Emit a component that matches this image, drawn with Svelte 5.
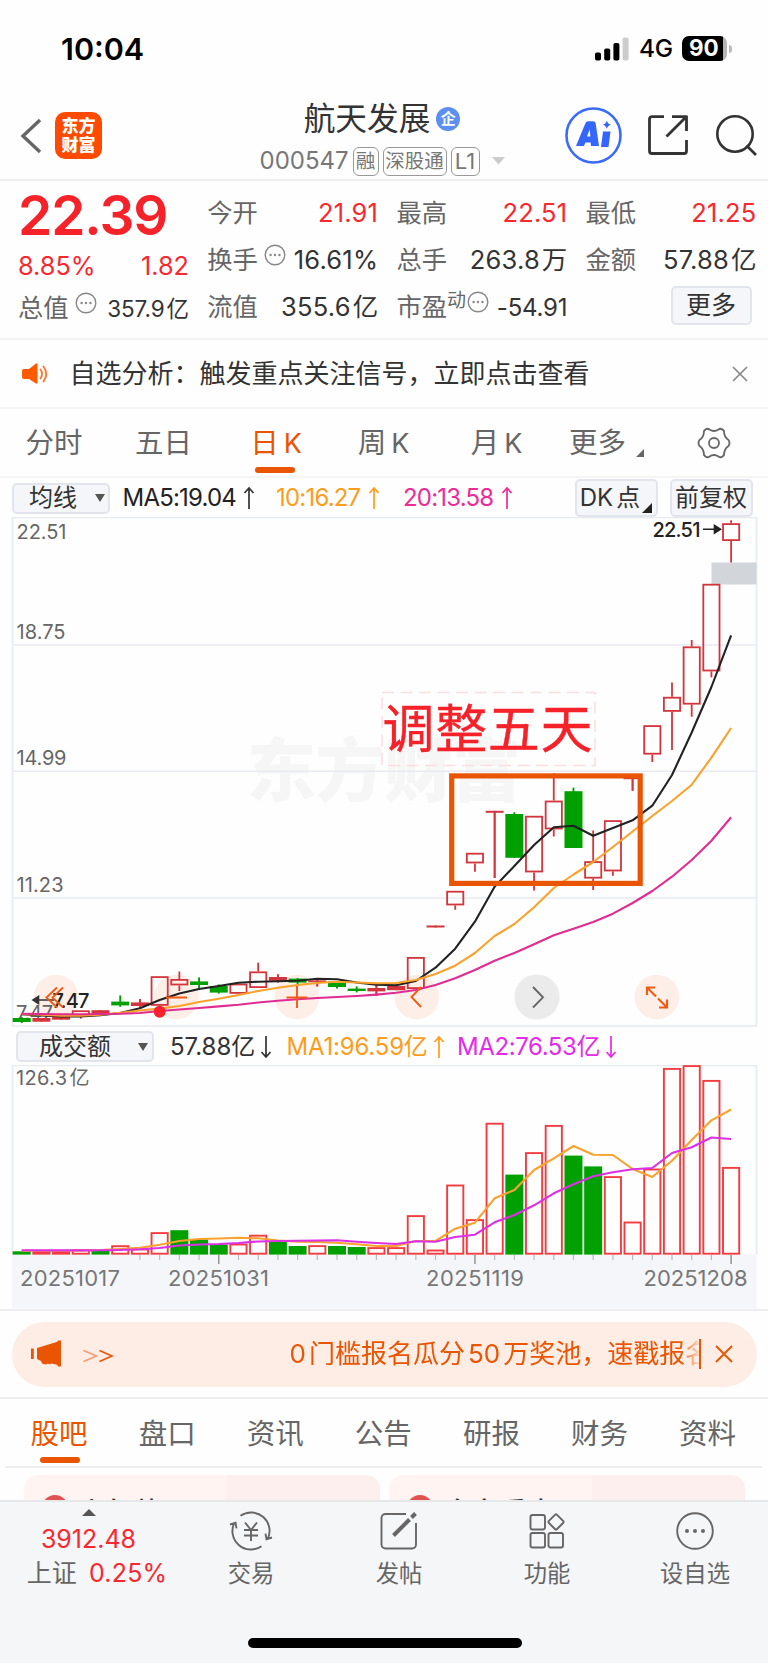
<script>
    let activePeriod = $state("日K");
    let activeSection = $state("股吧");

    const periods = ["分时", "五日", "日K", "周K", "月K", "更多"];
    const sections = ["股吧", "盘口", "资讯", "公告", "研报", "财务", "资料"];

    const FIRST_X = 21.7;
    const STEP = 19.706;
    const BASE = 1254.3;

    const cx = (i) => FIRST_X + STEP * i;

    // [type, body top, body bottom, wick top, wick bottom]
    // r = hollow red, f = filled red, g = green
    const candles = [
        ["g", 1018, 1022, 1017, 1023],
        ["f", 1018, 1021.7, 1018, 1021.7],
        ["f", 1016, 1019.7, 1016, 1019.7],
        ["r", 1010.3, 1017, 1010.3, 1018.6],
        ["f", 1010.2, 1014, 1010.2, 1014],
        ["g", 1001.6, 1005.4, 995.4, 1006.8],
        ["f", 1002.4, 1006, 999, 1007.4],
        ["r", 976.2, 1005.8, 976.2, 1005.8],
        ["r", 979, 985.4, 971.4, 991],
        ["g", 981.4, 985, 977.4, 988.6],
        ["g", 986, 992.6, 984.4, 993.6],
        ["r", 983.6, 993.8, 983.6, 993.8],
        ["r", 971.4, 988, 962.6, 988],
        ["f", 977, 980.8, 974.4, 982.4],
        ["g", 978.6, 982.6, 978, 984],
        ["f", 980.4, 982.2, 979, 986.4],
        ["g", 981.4, 987, 981.4, 988.4],
        ["g", 988.6, 991, 986.4, 992.4],
        ["f", 988, 991.4, 985, 996],
        ["f", 986, 990.2, 986, 990.2],
        ["r", 957, 989, 957, 989],
        ["f", 925.5, 927.5, 925.5, 927.5],
        ["r", 890.8, 905.4, 890.8, 909.8],
        ["r", 852.8, 863.4, 852.8, 871.8],
        ["f", 810.8, 812.8, 810.8, 878],
        ["g", 814, 857.8, 812.2, 857.8],
        ["r", 815.8, 872.4, 815.8, 890.4],
        ["r", 800.6, 829.4, 773.2, 836.4],
        ["g", 791.2, 848, 787.6, 848],
        ["r", 861.2, 878.6, 830.4, 890],
        ["r", 820.2, 871.4, 820.2, 875.8],
        ["f", 777.4, 779.2, 777.4, 790.8],
        ["r", 725.2, 754.6, 725.2, 762],
        ["r", 696.8, 711.8, 682.6, 750],
        ["r", 646.4, 704.6, 640, 716.8],
        ["r", 583.8, 671.4, 583.8, 677.4],
        ["r", 523.2, 541, 520.2, 562.4]
    ];

    const ma5 = [1014.3, 1015.5, 1016.5, 1016.5, 1015.3, 1013, 1008.3, 1000, 993.5, 989, 986, 982.7, 981.7, 981.3, 980.7, 978.7, 979.3, 982.5, 984.7, 985.3, 981, 967.7, 948.7, 921.7, 886.7, 866, 845, 827.3, 825.7, 835.7, 828, 820.3, 805.7, 775, 732.5, 687, 635.3];
    const ma10 = [1014, 1014.8, 1015.6, 1015.8, 1014.8, 1012.8, 1010.5, 1008.6, 1006, 1002, 998.7, 995, 991, 987.7, 985, 983, 981.7, 982.5, 983.3, 983, 980, 974, 965.7, 953, 936, 924, 907.3, 888, 874.5, 862, 847, 831.5, 816, 801, 784.7, 757.7, 728];
    const ma20 = [1013.7, 1014, 1014.2, 1014.2, 1014, 1013.8, 1013, 1011, 1009.5, 1008, 1006.4, 1004.7, 1002.5, 1000.8, 999.3, 998, 997, 996, 994.6, 992.8, 990, 985, 978.3, 970, 960.7, 953, 944.3, 935.3, 928.7, 922, 913.7, 903, 891, 876.7, 860, 840.7, 817.3];

    const volumes = [
        ["g", 1251.3], ["r", 1251.2], ["r", 1251.2], ["r", 1249.3], ["g", 1250.3],
        ["r", 1245.3], ["r", 1248.6], ["r", 1232.2], ["g", 1230.2], ["g", 1239.4],
        ["g", 1244.4], ["r", 1243.6], ["r", 1234.8], ["g", 1242], ["g", 1246],
        ["r", 1245.2], ["g", 1246], ["g", 1247], ["r", 1247.2], ["r", 1247.2],
        ["r", 1215.2], ["r", 1249.6], ["r", 1184.6], ["r", 1219.2], ["r", 1122.8],
        ["g", 1174.6], ["r", 1152.2], ["r", 1125], ["g", 1155.6], ["g", 1166.4],
        ["r", 1176.2], ["r", 1221.6], ["r", 1168.6], ["r", 1068], ["r", 1065.2],
        ["r", 1080], ["r", 1167]
    ];

    const volMa1 = [1250.7, 1250.7, 1250.7, 1250.5, 1250, 1249, 1247.7, 1244.7, 1241, 1239, 1238.5, 1237.7, 1238.3, 1240.5, 1241.7, 1242, 1242.7, 1244.3, 1246, 1246, 1241, 1241, 1228.7, 1222.7, 1198.3, 1190, 1170, 1158.3, 1146, 1154.7, 1155, 1169, 1177, 1160.7, 1140, 1120.3, 1109.5];
    const volMa2 = [1250.3, 1250.4, 1250.4, 1250.4, 1250.3, 1250, 1249.3, 1248, 1245.5, 1244.5, 1244, 1243, 1241.5, 1241, 1240.7, 1240.5, 1240.3, 1241.7, 1243, 1244, 1241.3, 1241.7, 1237, 1234.7, 1222.3, 1215, 1205.3, 1193.3, 1184.3, 1176.3, 1172.3, 1169.3, 1168, 1153, 1147.3, 1137.5, 1139];

    const line = (values) => values.map((y, i) => `${cx(i).toFixed(1)},${y}`).join(" ");
    const ticks = Array.from({ length: 31 }, (_, n) => n + 6);
</script>

{#snippet arrow(down)}
    <svg class="arrow" class:down width="12" height="24" viewBox="0 0 12 24">
        <path d="M6 23V2M1.5 7 6 2l4.5 5" fill="none" stroke="currentColor" stroke-width="1.7" />
    </svg>
{/snippet}

{#snippet dots()}
    <svg class="dots" width="22" height="22" viewBox="0 0 22 22">
        <circle cx="11" cy="11" r="9.8" fill="none" stroke="#888" stroke-width="1.4" />
        <circle cx="6.6" cy="11" r="1.2" fill="#888" /><circle cx="11" cy="11" r="1.2" fill="#888" /><circle cx="15.4" cy="11" r="1.2" fill="#888" />
    </svg>
{/snippet}

<div class="screen">
    <div class="status">
        <span class="clock">10:04</span>
        <div class="status-right">
            <svg width="34" height="24" viewBox="0 0 34 24">
                <rect x="0" y="15.5" width="6" height="8" rx="1.8" />
                <rect x="9.2" y="11.5" width="6" height="12" rx="1.8" />
                <rect x="18.4" y="6" width="6" height="17.5" rx="1.8" />
                <rect x="27.6" y="0.5" width="6" height="23" rx="1.8" fill="#ccc" />
            </svg>
            <span class="net">4G</span>
            <div class="battery"><span>90</span></div>
            <i class="tip"></i>
        </div>
    </div>

    <header>
        <svg class="back" width="22" height="36" viewBox="0 0 22 36"><path d="M20 2 3 18l17 16" fill="none" stroke="#666" stroke-width="3.4" /></svg>
        <div class="logo"><span>东方</span><span>财富</span></div>
        <div class="title">
            <div class="name">航天发展<b class="corp">企</b></div>
            <div class="code">
                <span class="num">000547</span>
                <em>融</em><em class="wide">深股通</em><em class="level">L1</em>
                <svg width="13" height="8" viewBox="0 0 13 8"><path d="M0 0h13L6.5 7.5z" fill="#ccc" /></svg>
            </div>
        </div>
        <div class="actions">
            <svg width="57" height="57" viewBox="0 0 57 57">
                <circle cx="28.5" cy="28.5" r="27" fill="none" stroke="#3a6bfa" stroke-width="2.6" />
                <path d="M11 39 20.5 16q.8-1.8 2.8-1.8h4.5q2.6 0 2.9 2.2L34 39h-8l-.4-3.6h-5.2L19 39z" fill="#3566fb" />
                <path d="M22 29.6h3.4l-.7-7z" fill="#fff" />
                <path d="m38 24.500h7.500l-2 15.500h-7.500z" fill="#3566fb" />
                <path d="M41.800 13.500q.7 3.600 4.300 4.300-3.600.7-4.300 4.300-.7-3.600-4.300-4.300 3.600-.7 4.300-4.300z" fill="#3566fb" />
            </svg>
            <svg class="share" width="42" height="42" viewBox="0 0 42 42" fill="none" stroke="#333" stroke-width="2.800" stroke-linejoin="round">
                <path d="M17 2.600H5a2.500 2.500 0 0 0-2.500 2.500V37a2.500 2.500 0 0 0 2.500 2.500h32a2.500 2.500 0 0 0 2.500-2.500V26M25 2.600h14.500V17M39 3 19.500 22.500" />
            </svg>
            <svg class="search" width="44" height="44" viewBox="0 0 44 44" fill="none" stroke="#333" stroke-width="2.600">
                <circle cx="20" cy="20" r="17.700" /><path d="m31.500 31.500 9.500 9.500" />
            </svg>
        </div>
    </header>

    <section class="quote">
        <div class="col main">
            <div class="price">22.39</div>
            <div class="row change red"><span>8.85%</span><span>1.82</span></div>
            <div class="row cap"><label>总值</label>{@render dots()}<span class="val small">357.9<u>亿</u></span></div>
        </div>
        <div class="col">
            <div class="row"><label>今开</label><span class="val red">21.91</span></div>
            <div class="row"><label>换手</label>{@render dots()}<span class="val">16.61%</span></div>
            <div class="row"><label>流值</label><span class="val">355.6<u>亿</u></span></div>
        </div>
        <div class="col">
            <div class="row"><label>最高</label><span class="val red">22.51</span></div>
            <div class="row"><label>总手</label><span class="val">263.8<u>万</u></span></div>
            <div class="row ratio"><label>市盈</label><sup>动</sup>{@render dots()}<span class="val pe">-54.91</span></div>
        </div>
        <div class="col">
            <div class="row"><label>最低</label><span class="val red">21.25</span></div>
            <div class="row"><label>金额</label><span class="val">57.88<u>亿</u></span></div>
            <div class="row"><button class="more">更多</button></div>
        </div>
    </section>

    <div class="notice">
        <svg width="26" height="22" viewBox="0 0 26 22">
            <path d="M0 8q0-2 2-2h5l7-5.500q1.500-.8 1.500 1v18q0 1.800-1.500 1L7 16H2q-2 0-2-2z" fill="#ff5a00" />
            <path d="M18.500 6.500q3 4.500 0 9M21.500 3.500q5.500 7.500 0 15" fill="none" stroke="#ff7a33" stroke-width="1.900" stroke-linecap="round" />
        </svg>
        <span>自选分析：触发重点关注信号，立即点击查看</span>
        <svg class="close" width="16" height="16" viewBox="0 0 16 16"><path d="m1 1 14 14M15 1 1 15" stroke="#888" stroke-width="1.700" /></svg>
    </div>

    <nav class="periods">
        {#each periods as p}
            <button class:active={activePeriod === p} onclick={() => (activePeriod = p)}>
                {p[0]}{#if p[1] === "K"}<span class="k">K</span>{:else}{p[1]}{/if}
                {#if p === "更多"}<i class="corner"></i>{/if}
            </button>
        {/each}
        <div class="gear">
            <svg width="34" height="32" viewBox="-17 -16 34 32" fill="none" stroke="#666" stroke-width="1.800" stroke-linejoin="round">
                <path d="M-8.500-13.500Q-6.500-15-4.500-13.500Q0-10.500 4.500-13.500Q6.500-15 8.500-13.500L10-12Q10-6 14.500-3Q16.500 0 14.500 3Q10 6 10 12L8.500 13.500Q6.500 15 4.500 13.500Q0 10.500-4.500 13.500Q-6.500 15-8.500 13.500L-10 12Q-10 6-14.500 3Q-16.500 0-14.500-3Q-10-6-10-12Z" />
                <circle r="5" />
            </svg>
        </div>
    </nav>

    <div class="ma-row">
        <button class="select">均线<i class="caret"></i></button>
        <span class="m5">MA5:19.04</span>{@render arrow(false)}
        <span class="orange m10">10:16.27{@render arrow(false)}</span>
        <span class="pink m20">20:13.58{@render arrow(false)}</span>
        <button class="dk">DK<u>点</u><i class="corner"></i></button>
        <button class="fq">前复权</button>
    </div>

    <svg class="chart" width="768" height="510" viewBox="0 517 768 510">
        <text x="247" y="796" class="watermark" textLength="274">东方财富</text>
        <g stroke="#e8eaf1" stroke-width="1.600" fill="none">
            <path d="M12 645H756.500M12 771.300H756.500M12 898H756.500" />
            <rect x="12.500" y="517.500" width="744" height="508.500" />
        </g>
        <rect x="711.500" y="562.500" width="45" height="22" fill="#d2d5da" />

        <g fill="#fdeee8">
            <circle cx="56" cy="997" r="22.300" />
            <circle cx="176.500" cy="997" r="22.300" />
            <circle cx="297" cy="997" r="22.300" />
            <circle cx="416.700" cy="997" r="22.300" />
            <circle cx="656.800" cy="997" r="22.300" />
        </g>
        <circle cx="537" cy="997" r="22.600" fill="#ebebeb" />

        <text x="16" y="1020" class="axis" textLength="37">7.47</text>

        {#each candles as [type, top, bottom, high, low], i}
            {#if type === "g"}
                <path d="M{cx(i)} {high}V{low}" stroke="#00a000" stroke-width="1.900" />
                <rect x={cx(i) - 9} y={top} width="18" height={bottom - top} fill="#00a000" />
            {:else}
                <path d="M{cx(i)} {high}V{top}M{cx(i)} {bottom}V{low}" stroke="#d2353b" stroke-width="1.800" />
                {#if type === "f"}
                    <path d="M{cx(i)} {high}V{low}" stroke="#d2353b" stroke-width="1.800" />
                {/if}
                <rect
                    x={type === "f" ? cx(i) - 9 : cx(i) - 8.1}
                    y={type === "f" ? top : top + 0.9}
                    width={type === "f" ? 18 : 16.2}
                    height={type === "f" ? bottom - top : bottom - top - 1.8}
                    fill={type === "f" ? "#d2353b" : "none"}
                    stroke={type === "f" ? "none" : "#d2353b"}
                    stroke-width="1.800" />
            {/if}
        {/each}

        <g fill="none" stroke-width="2.100" stroke-linejoin="round">
            <polyline points={line(ma5)} stroke="#222" />
            <polyline points={line(ma10)} stroke="#f9a22c" />
            <polyline points={line(ma20)} stroke="#e02c93" />
        </g>
        <circle cx="159.700" cy="1011.700" r="6" fill="#f5222d" />

        <text x="16.500" y="538.500" class="axis" textLength="50">22.51</text>
        <text x="16.500" y="638.500" class="axis" textLength="49">18.75</text>
        <text x="16.500" y="765" class="axis" textLength="50">14.99</text>
        <text x="16.500" y="892" class="axis" textLength="47">11.23</text>

        <text x="652.500" y="536.500" class="peak" textLength="48">22.51</text>
        <path d="M703 529.300h14M714.500 525.500l6 3.800-6 3.800z" stroke="#222" stroke-width="1.600" fill="#222" />
        <text x="52.500" y="1007.500" class="peak" textLength="37">7.47</text>
        <path d="M36 1000H54M38.500 996.500l-5.500 3.500 5.500 3.500z" stroke="#333" stroke-width="1.600" fill="#333" />

        <g fill="none" stroke="#f05a14" stroke-width="1.900">
            <path d="M57 987.500 46.500 997.500 57 1007.500M63 987.500 52.500 997.500 63 1007.500" />
            <path d="M166 997.500H187M286.500 997.500H307.500M297 986V1008" />
            <path d="M421 987 411.500 997 421 1007" />
            <path d="M647 995V987.500H655M647.500 988 656 996.500M667 999.500V1007.500H659M666.500 1007 658 998.500" stroke-width="2.100" />
        </g>
        <path d="M533 987 543 997.300 533 1007.500" fill="none" stroke="#666" stroke-width="1.900" />

        <rect x="382" y="692.500" width="213" height="73" fill="none" stroke="#fcdde0" stroke-width="1.500" stroke-dasharray="12 6.500" />
        <text x="382.500" y="747.500" class="note" textLength="210">调整五天</text>
        <rect x="451.700" y="775.900" width="188.500" height="107.500" fill="none" stroke="#ea5504" stroke-width="5.200" />
    </svg>

    <div class="ma-row vol">
        <button class="select">成交额<i class="caret"></i></button>
        <span class="v0">57.88亿</span>{@render arrow(true)}
        <span class="orange v1">MA1:96.59亿{@render arrow(false)}</span>
        <span class="violet v2">MA2:76.53亿{@render arrow(true)}</span>
    </div>

    <svg class="chart" width="768" height="244" viewBox="0 1065 768 244">
        <rect x="12" y="1254.500" width="744.500" height="54" fill="#f5f6f9" />
        <path d="M12.500 1255V1065.500H756.500V1255" fill="none" stroke="#e8eaf1" stroke-width="1.600" />
        <text x="16" y="1085" class="axis" textLength="51">126.3</text>
        <text x="69.500" y="1085" class="axis">亿</text>

        {#each volumes as [type, top], i}
            {#if type === "g"}
                <rect x={cx(i) - 9} y={top} width="18" height={BASE - top + 0.3} fill="#00a000" />
            {:else}
                <rect x={cx(i) - 8.1} y={top + 0.9} width="16.200" height={BASE - top - 1.5} fill="none" stroke="#f23c40" stroke-width="1.900" />
            {/if}
        {/each}

        <g fill="none" stroke-width="2.100" stroke-linejoin="round">
            <polyline points={line(volMa1)} stroke="#f9a22c" />
            <polyline points={line(volMa2)} stroke="#dc30e6" />
        </g>

        {#each ticks as i}
            {@const big = i === 10 || i === 23 || i === 36}
            <path d="M{cx(i)} 1255V{big ? 1264 : 1260}" stroke={big ? "#999" : "#bbb"} stroke-width={big ? 1.6 : 1.2} />
        {/each}

        <text x="20" y="1285.500" class="date" textLength="100">20251017</text>
        <text x="168" y="1285.500" class="date" textLength="101">20251031</text>
        <text x="426" y="1285.500" class="date" textLength="98">20251119</text>
        <text x="643.500" y="1285.500" class="date" textLength="104">20251208</text>
    </svg>

    <div class="promo">
        <div class="pill">
            <svg class="horn" width="31" height="28" viewBox="0 0 31 28" fill="#ea5504">
                <path d="M0 8.500h2.800v10.500H0zM6 8l18-5.500Q27 2 27 .5h3V26.500h-3q0-1.500-2-2l-4.500-1q-2 1.500-4 0l-1 1q-5 0-5.500-3.500L6 19z" />
            </svg>
            <svg class="angles" width="31" height="14" viewBox="0 0 31 14" fill="none" stroke="#ea5504" stroke-width="1.700">
                <path d="m.5 1.500 13 5.500-13 5.500" opacity=".5" /><path d="m16.500 1.500 12.500 5.500-12.500 5.500" />
            </svg>
            <div class="ticker">0<u>门</u>槛报名瓜分<u>50</u><u>万</u>奖池，速戳报名</div>
            <i class="bar"></i>
            <svg class="x" width="18" height="18" viewBox="0 0 18 18"><path d="m1 1 16 16M17 1 1 17" stroke="#ea5504" stroke-width="1.900" /></svg>
        </div>
    </div>

    <nav class="sections">
        {#each sections as s}
            <button class:active={activeSection === s} onclick={() => (activeSection = s)}>{s}</button>
        {/each}
    </nav>

    <div class="cards">
        <div class="card first"><i></i><span>上午荐</span></div>
        <div class="card second"><i></i><span>今市看点</span></div>
    </div>

    <footer>
        <div class="tabs">
            <div class="index">
                <i></i>
                <span class="red">3912.48</span>
                <div>上证<span class="red">0.25%</span></div>
            </div>
            <div class="tab">
                <svg width="44" height="40" viewBox="-22 -20 44 40" fill="none" stroke="#666" stroke-width="1.900">
                    <path d="M-10.500-15.200A18.500 18.500 0 0 1 16.500 8.500M10.500 15.200A18.500 18.500 0 0 1-16.500-8.500M-21-6.500l5.500-1.700 1 5.500M21 6.500l-5.500 1.700-1-5.500" />
                    <path d="M-6-8.500 0-1 6-8.500M0-1V10M-7-1H7M-7 4.500H7" />
                </svg>
                交易
            </div>
            <div class="tab">
                <svg width="40" height="40" viewBox="-20 -20 40 40" fill="none" stroke="#666" stroke-width="1.900">
                    <path d="M7-17H-13.500a4 4 0 0 0-4 4V13.500a4 4 0 0 0 4 4H13a4 4 0 0 0 4-4V-8" />
                    <path d="M-5.500 4.500 10.500-11.500M12.500-13.500 16.500-17.500" stroke-width="4" />
                </svg>
                发帖
            </div>
            <div class="tab">
                <svg width="40" height="40" viewBox="-20 -20 40 40" fill="none" stroke="#666" stroke-width="1.900">
                    <rect x="-16.500" y="-16" width="14.500" height="14.500" rx="2" />
                    <rect x="-16.500" y="2" width="14.500" height="14.500" rx="2" />
                    <rect x="1.500" y="2" width="14.500" height="14.500" rx="2" />
                    <rect x="3.200" y="-14.800" width="11.500" height="11.500" rx="1.500" transform="rotate(45 9 -9)" />
                </svg>
                功能
            </div>
            <div class="tab">
                <svg width="40" height="40" viewBox="-20 -20 40 40">
                    <circle r="17.800" fill="none" stroke="#666" stroke-width="1.900" />
                    <circle cx="-8" r="2" fill="#666" /><circle r="2" fill="#666" /><circle cx="8" r="2" fill="#666" />
                </svg>
                设自选
            </div>
        </div>
        <div class="home"></div>
    </footer>
</div>

<style>
    :global(body) {
        background: #fefefe;
    }

    .screen {
        width: 768px;
        height: 1665px;
        overflow: hidden;
        display: flex;
        flex-direction: column;
        background: #fefefe;
        color: #333;
        font-family: Inter, "Noto Sans CJK SC", sans-serif;
        font-size: 25px;
        line-height: 1;
    }

    .screen > * {
        flex: none;
        box-sizing: border-box;
    }

    svg {
        display: block;
        flex: none;
    }

    button {
        font: inherit;
        color: inherit;
        border: none;
        background: none;
        padding: 0;
        white-space: nowrap;
        box-sizing: border-box;
    }

    u {
        text-decoration: none;
        margin-left: 3px;
    }

    i, em {
        font-style: normal;
    }

    .red { color: #f8282f; }
    .orange { color: #ff9c1c; }
    .pink { color: #ee2a98; }
    .violet { color: #e42be8; }

    /* status bar */
    .status {
        height: 95px;
        display: flex;
        justify-content: space-between;
        padding: 0 36px 0 61px;
    }

    .clock {
        margin-top: 33.500px;
        color: #000;
        font-size: 30.500px;
        font-weight: 600;
        letter-spacing: 0;
    }

    .status-right {
        display: flex;
        align-items: center;
        height: 25px;
        margin-top: 36px;
        color: #000;
    }

    .net {
        width: 53px;
        padding-left: 10px;
        box-sizing: border-box;
        font-size: 24.500px;
        font-weight: 500;
        letter-spacing: -0.3px;
    }

    .battery {
        width: 45px;
        height: 25px;
        border-radius: 7px;
        background: linear-gradient(90deg, #000 41px, #b5b5b5 41px);
        color: #fff;
        font-size: 22.500px;
        font-weight: 700;
        display: flex;
        align-items: center;
        padding-left: 7px;
        box-sizing: border-box;
    }

    .tip {
        width: 3px;
        height: 8px;
        margin-left: 2px;
        border-radius: 0 4px 4px 0;
        background: #bbb;
    }

    /* header */
    header {
        height: 86px;
        display: flex;
        border-bottom: 2px solid #efefef;
        padding-left: 20px;
    }

    .back {
        margin-top: 23px;
    }

    .logo {
        width: 47px;
        height: 47px;
        margin: 17px 0 0 13px;
        border-radius: 10px;
        background: #ff4a00;
        color: #fff;
        font-size: 17px;
        font-weight: 900;
        display: flex;
        flex-direction: column;
        align-items: center;
        justify-content: center;
        gap: 1px;
    }

    .logo span {
        height: 18px;
        line-height: 18px;
    }

    .title {
        width: 290px;
        margin-left: 135px;
        display: flex;
        flex-direction: column;
        align-items: center;
    }

    .name {
        height: 32px;
        margin-top: 8px;
        display: flex;
        align-items: center;
        font-size: 31.700px;
        color: #333;
    }

    .corp {
        width: 24px;
        height: 24px;
        margin-left: 6px;
        border-radius: 50%;
        background: #5c8ff0;
        color: #fff;
        font-size: 15px;
        line-height: 23px;
        text-align: center;
    }

    .code {
        display: flex;
        align-items: center;
        height: 30px;
        margin-top: 11px;
        color: #777;
    }

    .num {
        font-size: 24px;
        width: 93px;
    }

    .code em {
        height: 29px;
        width: 26px;
        box-sizing: border-box;
        border: 1.500px solid #999;
        border-radius: 6px;
        font-size: 19.500px;
        line-height: 26px;
        text-align: center;
        white-space: nowrap;
    }

    .code .wide { width: 64px; margin-left: 4px; }
    .code .level { width: 29px; margin-left: 4px; font-size: 22px; }
    .code svg { margin-left: 12px; }

    .actions {
        display: flex;
        margin-left: 37.500px;
    }

    .actions svg { margin-top: 12px; }
    .actions .share { margin: 19px 0 0 25px; }
    .actions .search { margin: 19px 0 0 26px; }

    /* quote */
    .quote {
        height: 159px;
        display: grid;
        grid-template-columns: 171px 171px 171px 171px;
        column-gap: 18.200px;
        padding-left: 18px;
        border-bottom: 2px solid #f3f3f3;
    }

    .col {
        padding-top: 8px;
    }

    .row {
        height: 47px;
        display: flex;
        align-items: center;
    }

    .main {
        padding-top: 4px;
    }

    .price {
        height: 60px;
        line-height: 60px;
        font-size: 55px;
        font-weight: 600;
        color: #f5222a;
        letter-spacing: -1.1px;
    }

    .change {
        justify-content: space-between;
        height: 42px;
        font-size: 25.300px;
        letter-spacing: 0;
    }

    .cap {
        height: 42px;
    }

    label {
        flex: none;
        font-size: 25.300px;
        color: #666;
    }

    .val {
        margin-left: auto;
        font-size: 25.500px;
        letter-spacing: 0.2px;
        white-space: nowrap;
    }

    .val u {
        letter-spacing: 0;
        margin-left: 2px;
    }

    .small {
        font-size: 22.500px;
        padding-top: 3px;
        letter-spacing: -0.1px;
    }

    .pe {
        font-size: 24px;
        padding-top: 2px;
        letter-spacing: -0.2px;
    }

    .dots {
        margin: -10px 0 0 6px;
    }

    .ratio .dots {
        margin-left: 1px;
    }

    sup {
        flex: none;
        font-size: 19px;
        margin: -12px 0 0 0;
        vertical-align: baseline;
        line-height: 1;
        color: #666;
    }

    .more {
        width: 81px;
        height: 39px;
        margin: -3px 5px 0 auto;
        border: 2px solid #e3e5ec;
        border-radius: 5px;
        background: #f5f6f9;
    }

    /* notice */
    .notice {
        height: 69px;
        display: flex;
        align-items: center;
        padding: 0 20px 0 22px;
        border-bottom: 2px solid #f5f5f5;
        font-size: 26px;
    }

    .notice span {
        margin-left: 21.500px;
    }

    .close {
        margin-left: auto;
    }

    /* period tabs */
    .periods {
        height: 69px;
        display: grid;
        grid-template-columns: 108px 111px 114px 101px 125px 77px 132px;
        border-bottom: 2px solid #f5f5f5;
        font-size: 28.500px;
        color: #666;
    }

    .periods button,
    .sections button {
        position: relative;
        display: flex;
        align-items: center;
        justify-content: center;
        padding-top: 2px;
    }

    .k {
        margin-left: 5px;
        font-size: 27px;
    }

    .active {
        color: #ea5504;
    }

    .active::after {
        content: "";
        position: absolute;
        left: 50%;
        bottom: 3px;
        width: 40px;
        height: 6px;
        margin-left: -21px;
        border-radius: 3px;
        background: #ea5504;
    }

    .periods .corner {
        position: absolute;
        right: -8px;
        bottom: 19px;
        border: 4px solid transparent;
        border-right-color: #666;
        border-bottom-color: #666;
    }

    .gear {
        display: flex;
        align-items: center;
        justify-content: center;
        padding: 0 0 0 24px;
    }

    /* indicator rows */
    .ma-row {
        height: 39px;
        display: flex;
        align-items: center;
        padding-left: 12px;
        padding-top: 1px;
        font-size: 24px;
        letter-spacing: -0.8px;
        white-space: nowrap;
    }

    .ma-row > span {
        display: flex;
        align-items: center;
        justify-content: space-between;
    }

    .m5 { width: 115px; margin-left: 12.500px; color: #222; }
    .ma-row > .arrow { margin-left: 5px; }
    .m10 { width: 104px; margin-left: 21.500px; }
    .m20 { width: 110px; margin-left: 23px; }

    .down {
        transform: rotate(180deg);
    }

    .ma-row button {
        height: 31px;
        border: 2px solid #e3e5ec;
        border-radius: 5px;
        background: #f5f6f9;
        letter-spacing: 0;
        position: relative;
    }

    .ma-row .select {
        width: 98px;
        display: flex;
        align-items: center;
        justify-content: space-between;
        padding: 0 3px 0 15px;
    }

    .caret {
        border: 5px solid transparent;
        border-top: 8px solid #555;
        border-bottom: none;
    }

    .ma-row .dk {
        width: 83px;
        height: 38px;
        margin-left: 61.500px;
        padding-right: 12px;
    }

    .ma-row .fq {
        width: 83px;
        height: 38px;
        margin-left: 12px;
    }

    .dk .corner {
        position: absolute;
        right: 4px;
        bottom: 2px;
        border: 5.500px solid transparent;
        border-right-color: #222;
        border-bottom-color: #222;
    }

    .ma-row.vol {
        height: 38px;
        padding-left: 16px;
        letter-spacing: 0;
    }

    .ma-row.vol .select {
        width: 138px;
        padding: 0 4px 0 21px;
    }

    .v0 { width: 85px; margin-left: 16px; }
    .v1 { width: 158px; margin-left: 14.500px; letter-spacing: -0.2px; }
    .v2 { width: 160px; margin-left: 12.500px; letter-spacing: -0.400px; }

    .axis {
        font-size: 20px;
        fill: #666;
    }

    .peak {
        font-size: 20px;
        font-weight: 500;
        fill: #222;
    }

    .date {
        font-size: 22px;
        fill: #777;
    }

    .watermark {
        font-size: 69px;
        font-weight: 900;
        fill: #f6f6f6;
    }

    .note {
        font-size: 52px;
        fill: #f5222a;
        stroke: #f5222a;
        stroke-width: 0.4px;
    }

    /* promo banner */
    .promo {
        height: 90px;
        padding: 10.500px 11.500px 0 12px;
        border-top: 2px solid #ededf2;
        border-bottom: 2px solid #ededf2;
    }

    .pill {
        height: 65px;
        display: flex;
        align-items: center;
        border-radius: 33px;
        background: #fdede4;
        color: #ea5504;
        font-size: 26px;
    }

    .horn { margin-left: 19px; }
    .angles { margin: 3px 0 0 21px; }

    .ticker {
        width: 409.500px;
        margin-left: 175.500px;
        overflow: hidden;
        white-space: nowrap;
        line-height: 36px;
        mask-image: linear-gradient(90deg, #000 390px, transparent 412px);
    }

    .bar {
        width: 2px;
        height: 30px;
        background: #ea5504;
    }

    .x { margin-left: 14px; }

    /* section tabs */
    .sections {
        height: 69px;
        display: grid;
        grid-template-columns: repeat(7, 108.100px);
        padding: 0;
        margin: 0 6px 0 5px;
        border-bottom: 2px solid #ededf2;
        font-size: 28.500px;
        color: #666;
    }

    .sections button {
        padding-top: 4px;
    }

    .sections .active::after {
        margin-left: -19px;
    }

    .cards {
        height: 32px;
        display: grid;
        grid-template-columns: 356px 356px;
        gap: 9px;
        padding: 7px 24px 0;
        overflow: hidden;
    }

    .card {
        height: 80px;
        border-radius: 14px;
        display: flex;
        background: linear-gradient(90deg, #fff4f2 57%, #fdefed 57%);
    }

    .card i {
        width: 26px;
        height: 26px;
        flex: none;
        margin: 20px 0 0 18px;
        border-radius: 50%;
        background: #e0524f;
    }

    .card span {
        margin: 24px 0 0 11px;
        font-size: 27px;
        font-weight: 500;
    }

    .second span {
        font-size: 28px;
        margin-left: 10px;
    }

    /* bottom bar */
    footer {
        height: 163px;
        border-top: 2px solid #e6e7eb;
        background: #f5f6f8;
    }

    .tabs {
        display: grid;
        grid-template-columns: 177px repeat(4, 148px);
    }

    .index {
        display: flex;
        flex-direction: column;
        align-items: center;
        color: #666;
    }

    .index i {
        margin-top: 7px;
        border: 7px solid transparent;
        border-bottom: 7px solid #555;
        border-top: none;
    }

    .index > span {
        margin-top: 11px;
        height: 25px;
    }

    .index div {
        display: flex;
        align-items: center;
        height: 26px;
        margin: 8px 0 0 17px;
        letter-spacing: 0.2px;
    }

    .index div span {
        margin-left: 12px;
    }

    .tab {
        display: flex;
        flex-direction: column;
        align-items: center;
        padding-top: 9px;
        gap: 11px;
        font-size: 23.300px;
        color: #666;
    }

    .home {
        width: 274px;
        height: 10px;
        margin: 52px 0 0 248px;
        border-radius: 5px;
        background: #000;
    }
</style>
